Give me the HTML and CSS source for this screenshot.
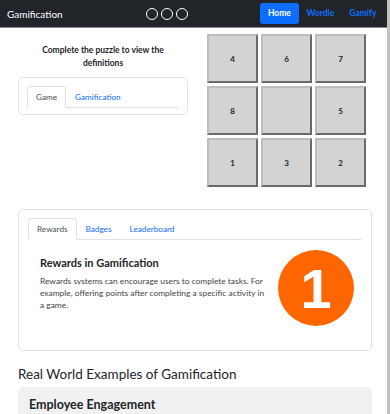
FILE: index.html
```html
<!DOCTYPE html>
<html lang="en">
<head>
    <meta charset="UTF-8">
    <meta name="viewport" content="width=device-width, initial-scale=1.0">
    <title>Gamification</title>
    <link rel="stylesheet" href="styles.css">
</head>
<body>
    <div class="page">
        <nav class="navbar">
            <span class="brand">Gamification</span>
            <div class="dots">
                <span class="dot"></span>
                <span class="dot"></span>
                <span class="dot"></span>
            </div>
            <ul class="nav-links">
                <li><a href="#" class="active">Home</a></li>
                <li><a href="#">Wordle</a></li>
                <li><a href="#">Gamify</a></li>
            </ul>
        </nav>
        <main class="container">
            <section class="puzzle-row">
                <div class="intro">
                    <h6>Complete the puzzle to view the definitions</h6>
                    <div class="card small-card">
                        <ul class="tabs">
                            <li class="tab active">Game</li>
                            <li class="tab">Gamification</li>
                        </ul>
                    </div>
                </div>
                <div class="puzzle">
                    <div class="tile">4</div>
                    <div class="tile">6</div>
                    <div class="tile">7</div>
                    <div class="tile">8</div>
                    <div class="tile"></div>
                    <div class="tile">5</div>
                    <div class="tile">1</div>
                    <div class="tile">3</div>
                    <div class="tile">2</div>
                </div>
            </section>
            <section class="card info-card">
                <ul class="tabs">
                    <li class="tab active">Rewards</li>
                    <li class="tab">Badges</li>
                    <li class="tab">Leaderboard</li>
                </ul>
                <div class="tab-body">
                    <div class="tab-text">
                        <h4>Rewards in Gamification</h4>
                        <p>Rewards systems can encourage users to complete tasks. For example, offering points after completing a specific activity in a game.</p>
                    </div>
                    <div class="badge-one">1</div>
                </div>
            </section>
            <h2 class="section-title">Real World Examples of Gamification</h2>
            <div class="example-card">
                <h3>Employee Engagement</h3>
            </div>
        </main>
    </div>
</body>
</html>
```

FILE: styles.css
```css
* {
    margin: 0;
    padding: 0;
    box-sizing: border-box;
}
html {
    background: #c1c1c1;
}
body {
    font-family: Lato, 'Open Sans', sans-serif;
    color: #212529;
    overflow: hidden;
}
.page {
    width: 387px;
    min-height: 414px;
    background: #fff;
}
.navbar {
    height: 28px;
    background-color: #212529;
    border-bottom: 1px solid #888;
    display: flex;
    align-items: center;
    padding: 0 3px 0 7px;
}
.brand {
    color: #fff;
    font-size: 10px;
    width: 139px;
}
.dots {
    display: flex;
    gap: 3px;
}
.dot {
    width: 12px;
    height: 12px;
    border: 1.5px solid #fff;
    border-radius: 50%;
}
.nav-links {
    list-style: none;
    display: flex;
    margin-left: auto;
}
.nav-links a {
    display: block;
    font-size: 8.5px;
    font-weight: 700;
    color: #0d6efd;
    text-decoration: none;
    padding: 5px 7.5px 6px;
    border-radius: 3px;
}
.nav-links a.active {
    background-color: #0d6efd;
    color: #fff;
    padding-left: 8px;
    padding-right: 8px;
}
.container {
    padding: 0 15px 0 18px;
}
.puzzle-row {
    display: flex;
    gap: 19px;
    padding-top: 6px;
}
.intro {
    width: 170px;
}
.intro h6 {
    font-size: 8.5px;
    font-weight: 700;
    text-align: center;
    line-height: 13px;
    padding: 10px 12px 7px;
}
.card {
    border: 1px solid #dee2e6;
    border-radius: 5px;
    background: #fff;
}
.small-card {
    padding: 8px 8px 6px;
}
.tabs {
    list-style: none;
    display: flex;
    border-bottom: 1px solid #dee2e6;
}
.tab {
    font-size: 8.2px;
    color: #0d6efd;
    padding: 5px 8px;
    margin-bottom: -1px;
    border: 1px solid transparent;
    border-radius: 4px 4px 0 0;
}
.tab.active {
    color: #495057;
    border-color: #dee2e6 #dee2e6 #fff;
}
.puzzle {
    display: grid;
    grid-template-columns: repeat(3, 51px);
    grid-auto-rows: 49px;
    gap: 3px;
}
.tile {
    background: #d3d3d3;
    border: 2px outset #bdbdbd;
    display: flex;
    align-items: center;
    justify-content: center;
    font-size: 8px;
    font-weight: 700;
}
.info-card {
    margin-top: 22px;
    height: 142px;
    padding: 8px 9px;
}
.tab-body {
    display: flex;
    align-items: flex-start;
    padding: 10px 8px 0 12px;
}
.tab-text {
    flex: 1;
    padding: 6px 12px 0 0;
}
.tab-text h4 {
    font-size: 11px;
    font-weight: 700;
    margin-bottom: 6px;
}
.tab-text p {
    font-size: 8.4px;
    line-height: 12px;
    color: #444;
}
.badge-one {
    width: 76px;
    height: 76px;
    border-radius: 50%;
    background: #ff6600;
    color: #fff;
    font-family: 'Liberation Sans', Arial, sans-serif;
    font-weight: 700;
    font-size: 56px;
    display: flex;
    align-items: center;
    justify-content: center;
}
.section-title {
    font-size: 13.5px;
    font-weight: 400;
    margin: 15px 0 5px;
}
.example-card {
    background: #f1f1f1;
    border-radius: 6px;
    padding: 10px 11px;
}
.example-card h3 {
    font-size: 12.5px;
    font-weight: 700;
}
```
